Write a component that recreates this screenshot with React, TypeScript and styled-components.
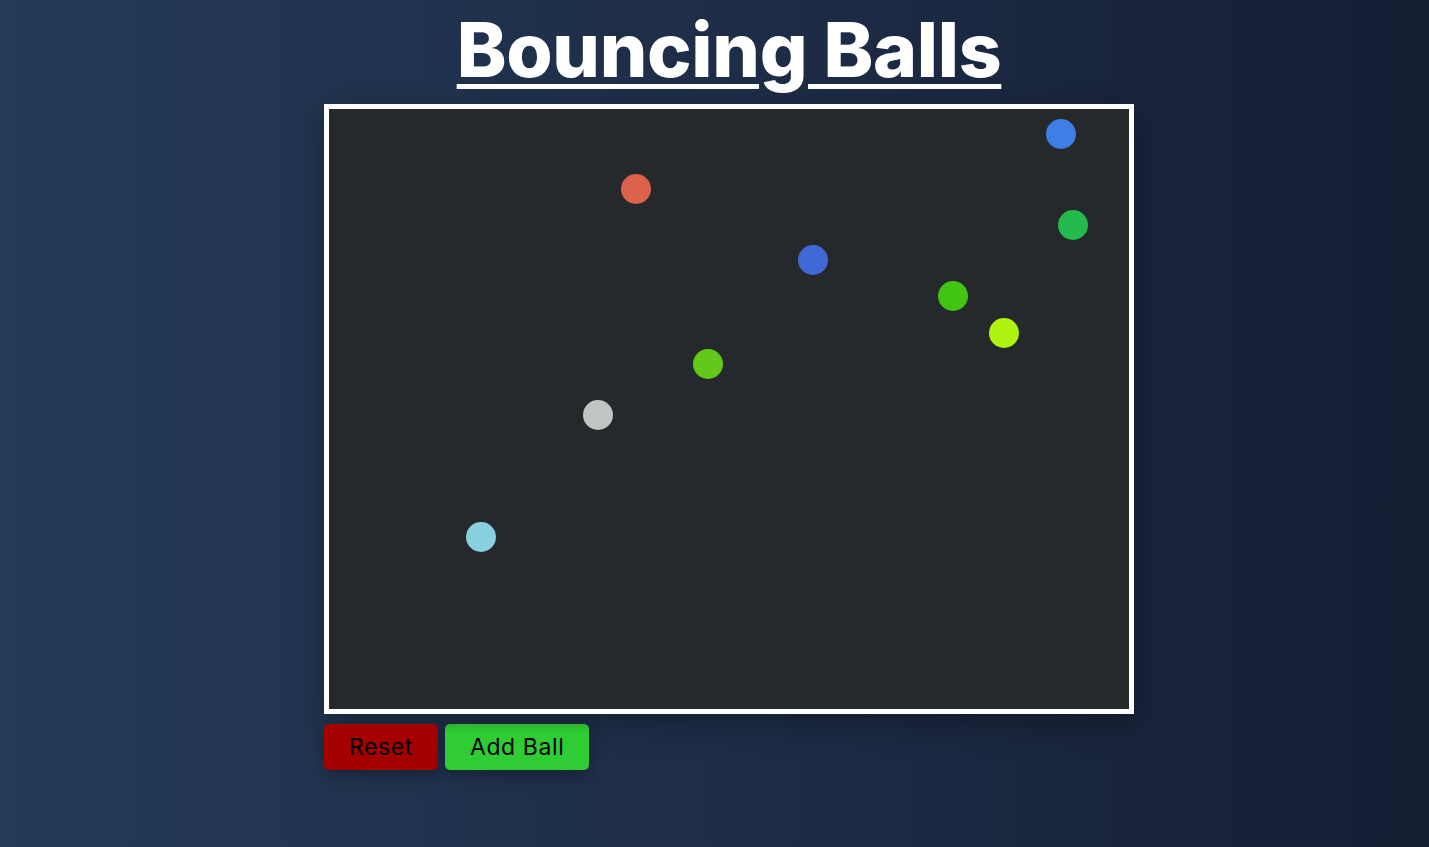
import React from "react";
import styled, { createGlobalStyle } from "styled-components";

interface Ball {
  x: number;
  y: number;
  color: string;
}

const balls: Ball[] = [
  { x: 732, y: 25, color: "#3d7fe5" },
  { x: 307, y: 80, color: "#dc624b" },
  { x: 744, y: 116, color: "#25b84c" },
  { x: 484, y: 151, color: "#4169d5" },
  { x: 624, y: 187, color: "#41c412" },
  { x: 675, y: 224, color: "#b0f210" },
  { x: 379, y: 255, color: "#62c81a" },
  { x: 269, y: 306, color: "#c0c4c2" },
  { x: 152, y: 428, color: "#88cfdf" },
];

const GlobalStyle = createGlobalStyle`
  html, body {
    margin: 0;
    padding: 0;
  }
  body {
    min-height: 100vh;
    background: linear-gradient(90deg, #243a56 0%, #1e2d48 50%, #151e33 100%);
    font-family: "Inter", "Noto Sans", sans-serif;
  }
`;

const App = () => {
  return (
    <>
      <GlobalStyle />
      <Page>
        <Title>Bouncing Balls</Title>
        <Board>
          <svg width="800" height="600" viewBox="0 0 800 600">
            {balls.map((ball) => (
              <circle
                key={ball.x + "-" + ball.y}
                cx={ball.x}
                cy={ball.y}
                r={15}
                fill={ball.color}
              />
            ))}
          </svg>
        </Board>
        <Controls>
          <Button $variant="reset">Reset</Button>
          <Button $variant="add">Add Ball</Button>
        </Controls>
      </Page>
    </>
  );
};

export default App;

const Page = styled.div`
  display: flex;
  flex-direction: column;
  align-items: center;
  padding-left: 29px;
  min-height: 100vh;
  box-sizing: border-box;
`;

const Title = styled.h1`
  margin: 7px 0 11px;
  color: #ffffff;
  font-family: "Inter", "Noto Sans", sans-serif;
  font-size: 75px;
  font-weight: 800;
  line-height: 86px;
  letter-spacing: -0.3px;
  text-decoration: underline;
  text-decoration-thickness: 5px;
  text-underline-offset: 7px;
`;

const Board = styled.div`
  display: flex;
  border: 5px solid #ffffff;
  background: #25292c;
  box-shadow: 0 10px 30px rgba(0, 0, 0, 0.3);

  svg {
    display: block;
  }
`;

const Controls = styled.div`
  display: flex;
  gap: 7px;
  width: 810px;
  margin-top: 10px;
`;

const Button = styled.button<{ $variant: "reset" | "add" }>`
  height: 46px;
  padding: 0 25px;
  border: none;
  border-radius: 5px;
  color: #000000;
  font-family: "Inter", "Noto Sans", sans-serif;
  font-size: 23px;
  font-weight: 400;
  letter-spacing: 0.6px;
  cursor: pointer;
  box-shadow: 0 6px 16px rgba(0, 0, 0, 0.3);
  background: ${({ $variant }) =>
    $variant === "reset"
      ? "#a50000"
      : "linear-gradient(180deg, #2bb52d 0%, #30cc33 20%, #30cc33 100%)"};
`;
